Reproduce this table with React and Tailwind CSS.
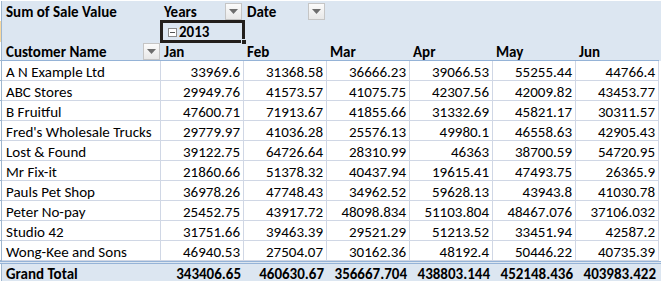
import React from 'react';

const months = ['Jan', 'Feb', 'Mar', 'Apr', 'May', 'Jun'];

const rows = [
  ['A N Example Ltd', '33969.6', '31368.58', '36666.23', '39066.53', '55255.44', '44766.4'],
  ['ABC Stores', '29949.76', '41573.57', '41075.75', '42307.56', '42009.82', '43453.77'],
  ['B Fruitful', '47600.71', '71913.67', '41855.66', '31332.69', '45821.17', '30311.57'],
  ["Fred's Wholesale Trucks", '29779.97', '41036.28', '25576.13', '49980.1', '46558.63', '42905.43'],
  ['Lost & Found', '39122.75', '64726.64', '28310.99', '46363', '38700.59', '54720.95'],
  ['Mr Fix-it', '21860.66', '51378.32', '40437.94', '19615.41', '47493.75', '26365.9'],
  ['Pauls Pet Shop', '36978.26', '47748.43', '34962.52', '59628.13', '43943.8', '41030.78'],
  ['Peter No-pay', '25452.75', '43917.72', '48098.834', '51103.804', '48467.076', '37106.032'],
  ['Studio 42', '31751.66', '39463.39', '29521.29', '51213.52', '33451.94', '42587.2'],
  ['Wong-Kee and Sons', '46940.53', '27504.07', '30162.36', '48192.4', '50446.22', '40735.39'],
];

const totals = ['343406.65', '460630.67', '356667.704', '438803.144', '452148.436', '403983.422'];

const grid = 'grid grid-cols-[2px_159px_repeat(6,83px)]';

function Dropdown() {
  return (
    <div className="w-[17px] h-[17px] border border-[#c5c5c5] bg-gradient-to-b from-[#fbfbfb] to-[#e8e8e8] flex items-center justify-center shrink-0">
      <svg width="9" height="5" viewBox="0 0 9 5">
        <path d="M0 0h9L4.5 5z" fill="#6d6d6d" />
      </svg>
    </div>
  );
}

export default function App() {
  return (
    <div className="w-[661px] h-[281px] bg-white overflow-hidden text-[15px] leading-none text-black" style={{ fontFamily: 'Carlito, Lato, "Liberation Sans", sans-serif' }}>
      {/* Header block */}
      <div className={`${grid} bg-[#dce6f1] border-t border-white`}>
        {/* row 1 */}
        <div className="h-[20px] bg-white border-r border-[#9eb6ce]" />
        <div className="h-[20px] flex items-center pl-[4px] pt-[3px] font-bold">Sum of Sale Value</div>
        <div className="h-[20px] flex items-center justify-between pl-[3px] pr-[2px] font-bold">
          <span className="pt-[3px]">Years</span>
          <Dropdown />
        </div>
        <div className="h-[20px] flex items-center justify-between pl-[3px] pr-[2px] font-bold">
          <span className="pt-[3px]">Date</span>
          <Dropdown />
        </div>
        <div className="col-span-4" />

        {/* row 2 */}
        <div className="h-[21px] bg-[#f9d99f] border-r border-[#9eb6ce]" />
        <div className="h-[21px]" />
        <div className="h-[21px] relative flex items-center pl-[7px] font-bold">
          <span className="w-[9px] h-[9px] border border-[#8c8c8c] bg-white flex items-center justify-center mr-[2px] mt-[1px]">
            <span className="w-[5px] h-px bg-[#555]" />
          </span>
          <span className="pt-[2px]">2013</span>
          <div className="absolute -left-px -top-px -right-[1px] -bottom-[1px] border-[3px] border-[#231f1c]" />
          <div className="absolute -right-[3px] -bottom-[3px] w-[6px] h-[6px] bg-[#231f1c] border border-[#dce6f1]" />
        </div>
        <div className="col-span-5" />

        {/* row 3 */}
        <div className="h-[19px] bg-white border-r border-[#9eb6ce] border-b border-b-[#9eb6ce]" />
        <div className="h-[19px] flex items-center justify-between pl-[4px] pr-[1px] font-bold border-b border-[#95b3d7]">
          <span className="pt-[3px]">Customer Name</span>
          <Dropdown />
        </div>
        {months.map((m) => (
          <div key={m} className="h-[19px] flex items-center pl-[3px] pt-[3px] font-bold border-b border-[#95b3d7]">
            {m}
          </div>
        ))}
      </div>

      {/* Data rows */}
      {rows.map((r) => (
        <div key={r[0]} className={grid}>
          <div className="h-[20px] bg-white border-r border-[#9eb6ce] border-b border-b-[#9eb6ce]" />
          <div className="h-[20px] flex items-center pl-[4px] pt-[3px] border-r border-b border-[#d0d7e5] whitespace-nowrap">{r[0]}</div>
          {r.slice(1).map((v, i) => (
            <div key={i} className="h-[20px] flex items-center justify-end pr-[3px] pt-[3px] border-r border-b border-[#d0d7e5]">
              {v}
            </div>
          ))}
        </div>
      ))}

      {/* Grand total */}
      <div className={`${grid} bg-[#dce6f1] border-t-[3px] border-double border-[#95b3d7]`}>
        <div className="h-[18px] bg-white border-r border-[#9eb6ce]" />
        <div className="h-[18px] flex items-center pl-[4px] pt-[2px] font-bold">Grand Total</div>
        {totals.map((v, i) => (
          <div key={i} className="h-[18px] flex items-center justify-end pr-[3px] pt-[2px] font-bold">
            {v}
          </div>
        ))}
      </div>
    </div>
  );
}
